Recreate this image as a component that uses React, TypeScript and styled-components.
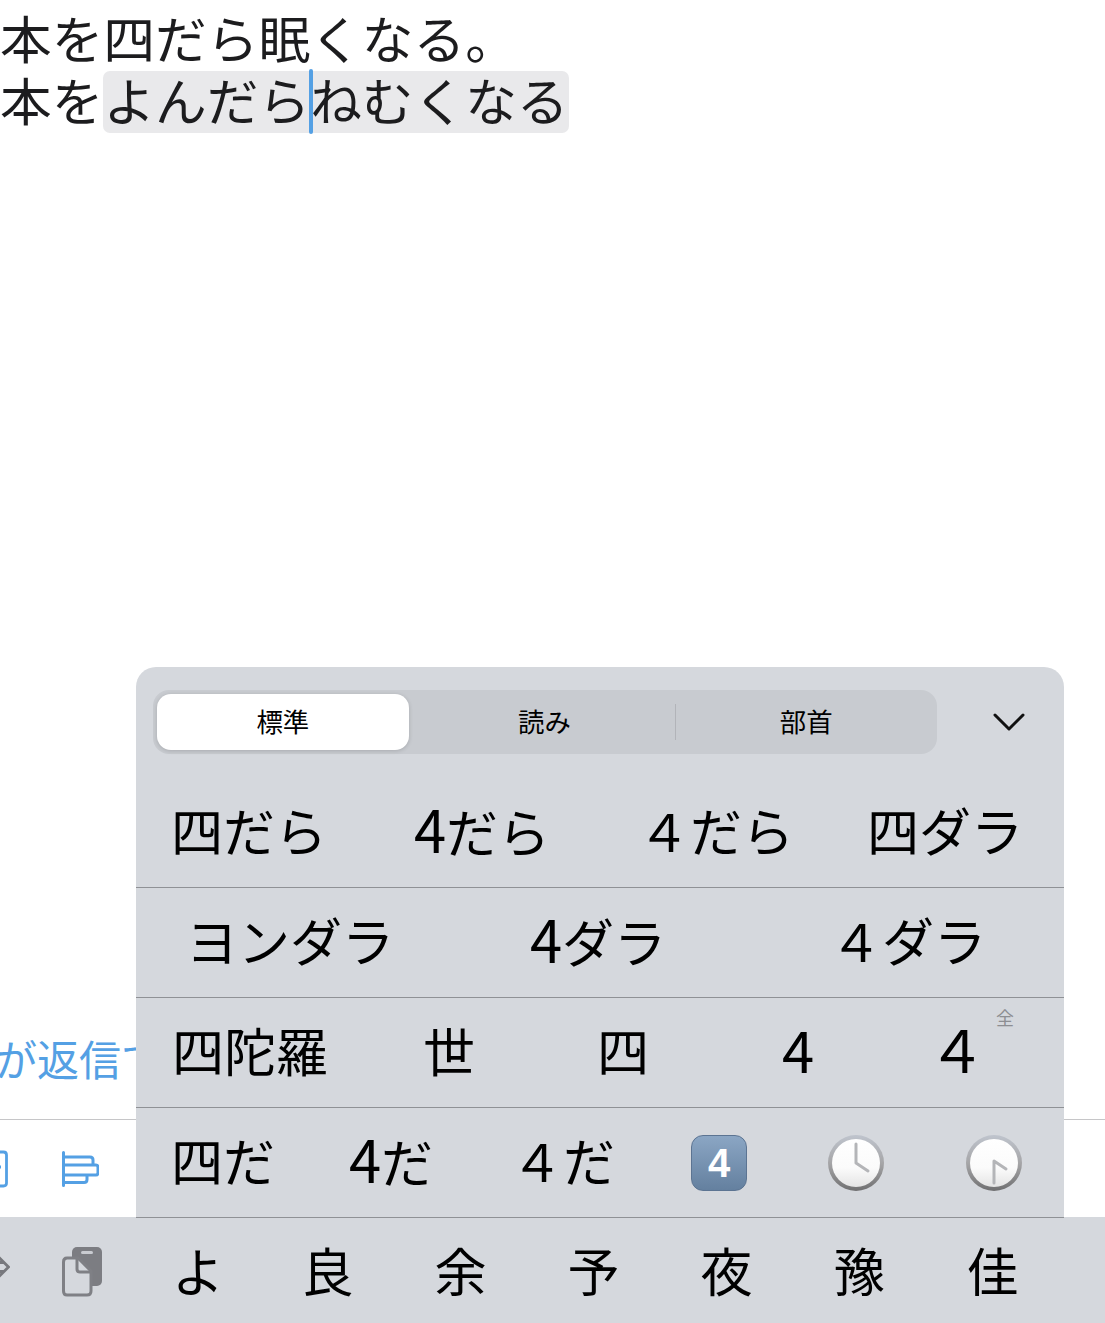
import { FC, ReactNode } from "react";
import styled, { createGlobalStyle } from "styled-components";

const JP = `"Noto Sans CJK JP", "Noto Sans", sans-serif`;

const rows: { tracks: number[]; items: string[] }[] = [
  { tracks: [226, 240, 228, 230], items: ["四だら", "4だら", "４だら", "四ダラ"] },
  { tracks: [308, 308, 312], items: ["ヨンダラ", "4ダラ", "４ダラ"] },
  { tracks: [228, 170, 178, 172, 146], items: ["四陀羅", "世", "四", "4", "４"] },
];

const tabs = ["読み", "部首"];
const keys = ["よ", "良", "余", "予", "夜", "豫", "佳"];

// half width 4 is drawn larger than the kana beside it
const renderCandidate = (text: string): ReactNode => {
  if (text.startsWith("4")) {
    return (
      <>
        <Digit>4</Digit>
        {text.slice(1)}
      </>
    );
  }
  if (text === "４") return <Digit>４</Digit>;
  return text;
};

const ClockFace: FC<{ id: string; hands: string }> = ({ id, hands }) => (
  <svg width="58" height="58" viewBox="0 0 58 58">
    <defs>
      <linearGradient id={`${id}-rim`} x1="0" y1="0" x2="0" y2="1">
        <stop offset="0" stopColor="#bfc4cd" />
        <stop offset="0.5" stopColor="#a6a6a8" />
        <stop offset="1" stopColor="#6f6f70" />
      </linearGradient>
      <linearGradient id={`${id}-face`} x1="0" y1="0" x2="0" y2="1">
        <stop offset="0" stopColor="#ffffff" />
        <stop offset="0.6" stopColor="#fbfbfb" />
        <stop offset="1" stopColor="#e4e4e4" />
      </linearGradient>
    </defs>
    <circle cx="29" cy="29" r="28" fill={`url(#${id}-rim)`} />
    <circle cx="29" cy="29" r="24" fill={`url(#${id}-face)`} />
    <path d={hands} fill="none" stroke="#b4b5b8" strokeWidth="3" strokeLinecap="round" strokeLinejoin="round" />
  </svg>
);

const App: FC = () => (
  <>
    <GlobalStyle />
    <Page>
      <Editor>
        <TextLine>本を四だら眠くなる。</TextLine>
        <TextLine>
          本を
          <Marked>
            よんだら
            <CaretAnchor>
              <Caret />
            </CaretAnchor>
            ねむくなる
          </Marked>
        </TextLine>
      </Editor>

      <ReplyLink>が返信で</ReplyLink>

      <Toolbar>
        <svg width="8" height="38" viewBox="0 0 8 38">
          <path d="M-4 2 H3.5 Q6.5 2 6.5 5 V33 Q6.5 36 3.5 36 H-4 M-4 17 H1" fill="none" stroke="#54a0e4" strokeWidth="2.8" />
        </svg>
        <svg width="38" height="36" viewBox="0 0 38 36">
          <path
            d="M2.5 1.5 V34.5 M2.5 6 H29 Q32 6 32 9 V14 M2.5 14 H35 Q37 14 37 16.5 V21.5 Q37 24 35 24 H2.5 M26 24 V28.5 Q26 31.5 23 31.5 H2.5"
            fill="none"
            stroke="#54a0e4"
            strokeWidth="3"
            strokeLinecap="round"
          />
        </svg>
      </Toolbar>

      <KeyboardBar>
        <LeadIcons>
          <ForwardArrow width="10" height="22" viewBox="0 0 10 22">
            <path d="M-6 6.5 H4 M-6 15.5 H4 M-1 1.5 L8.5 11 L-1 20.5" fill="none" stroke="#77787d" strokeWidth="2.8" />
          </ForwardArrow>
          <PasteIcon width="42" height="50" viewBox="0 0 42 50">
            <rect x="10" y="0" width="30" height="39" rx="5" fill="#7c7d82" />
            <rect x="19" y="4" width="12" height="3" rx="1.5" fill="#c9cbd0" />
            <path
              d="M5 11 H16 L29 24 V44 Q29 48 25 48 H5 Q1.5 48 1.5 44 V15 Q1.5 11 5 11 Z"
              fill="#d5d8dd"
              stroke="#7f8085"
              strokeWidth="3"
              strokeLinejoin="round"
            />
            <path d="M15 12 V22 Q15 25 18 25 H29" fill="none" stroke="#7f8085" strokeWidth="3" />
          </PasteIcon>
        </LeadIcons>
        {keys.map((k) => (
          <KeyCell key={k}>{k}</KeyCell>
        ))}
      </KeyboardBar>

      <CandidatePanel>
        <PanelHeader>
          <SegmentBar>
            <ActiveTab>標準</ActiveTab>
            {tabs.map((t, i) => (
              <Tab key={t} $divided={i > 0}>
                {t}
              </Tab>
            ))}
          </SegmentBar>
          <CollapseButton>
            <svg width="32" height="18" viewBox="0 0 32 18">
              <path d="M2 2 L16 16 L30 2" fill="none" stroke="#111" strokeWidth="3" strokeLinecap="round" strokeLinejoin="round" />
            </svg>
          </CollapseButton>
        </PanelHeader>

        {rows.map((row) => (
          <CandidateRow key={row.items[0]} $tracks={row.tracks}>
            {row.items.map((item) => (
              <Candidate key={item}>
                <CandidateText>{renderCandidate(item)}</CandidateText>
                {item === "４" && <WidthTag>全</WidthTag>}
              </Candidate>
            ))}
          </CandidateRow>
        ))}

        <CandidateRow $tracks={[174, 162, 182, 130, 144, 132]}>
          <Candidate>
            <CandidateText>四だ</CandidateText>
          </Candidate>
          <Candidate>
            <CandidateText>{renderCandidate("4だ")}</CandidateText>
          </Candidate>
          <Candidate>
            <CandidateText>４だ</CandidateText>
          </Candidate>
          <Candidate>
            <Keycap>4</Keycap>
          </Candidate>
          <Candidate>
            <ClockFace id="four" hands="M29 10 V29 L41 37" />
          </Candidate>
          <Candidate>
            <ClockFace id="half" hands="M29 49 V27 L41 35" />
          </Candidate>
        </CandidateRow>
      </CandidatePanel>
    </Page>
  </>
);

export default App;

const GlobalStyle = createGlobalStyle`
  html, body {
    margin: 0;
    padding: 0;
    background: #fff;
    font-family: ${JP};
  }
`;

const Page = styled.div`
  position: relative;
  width: 1105px;
  height: 1323px;
  overflow: hidden;
  display: flex;
  flex-direction: column;
  background: #fff;
`;

const Editor = styled.div`
  flex: 1;
  padding-top: 9px;
`;

const TextLine = styled.div`
  font-size: 51.7px;
  line-height: 56px;
  height: 62px;
  color: #1c1c1e;
  white-space: nowrap;
`;

const Marked = styled.span`
  display: inline-block;
  height: 62px;
  background: #e9e9eb;
  border-radius: 7px;
`;

const CaretAnchor = styled.span`
  position: relative;
  display: inline-block;
  width: 0;
  height: 62px;
  vertical-align: top;
`;

const Caret = styled.span`
  position: absolute;
  left: -1px;
  top: -2px;
  width: 4px;
  height: 65px;
  border-radius: 2px;
  background: #54a0e4;
`;

const ReplyLink = styled.div`
  height: 118px;
  line-height: 114px;
  font-size: 42px;
  color: #54a0e4;
  text-indent: -5px;
  white-space: nowrap;
`;

const Toolbar = styled.div`
  height: 97px;
  border-top: 1px solid #c6c6c8;
  display: flex;
  align-items: center;
  gap: 53px;
`;

const KeyboardBar = styled.div`
  height: 106px;
  background: #d5d8dd;
  display: flex;
  align-items: center;
`;

const LeadIcons = styled.div`
  width: 128px;
  display: flex;
  align-items: center;
  gap: 52px;
`;

const ForwardArrow = styled.svg`
  margin-bottom: 6px;
`;

const PasteIcon = styled.svg`
  margin-top: 4px;
`;

const KeyCell = styled.div`
  width: 133px;
  box-sizing: border-box;
  text-align: center;
  font-size: 52px;
  line-height: 60px;
  color: #000;
  ${LeadIcons} + & {
    padding-left: 7px;
  }
`;

const CandidatePanel = styled.div`
  position: absolute;
  left: 136px;
  top: 667px;
  width: 928px;
  height: 551px;
  background: #d5d8dd;
  border-radius: 20px 20px 0 0;
  display: flex;
  flex-direction: column;
`;

const PanelHeader = styled.div`
  height: 111px;
  box-sizing: border-box;
  padding: 23px 0 0 17px;
  display: flex;
  align-items: flex-start;
`;

const SegmentBar = styled.div`
  flex: none;
  width: 784px;
  height: 64px;
  box-sizing: border-box;
  padding: 4px 0 4px 4px;
  background: #c8cbd0;
  border-radius: 16px;
  display: flex;
  align-items: stretch;
`;

const ActiveTab = styled.div`
  width: 252px;
  margin-right: 5px;
  background: #fff;
  border-radius: 14px;
  box-shadow: 0 1px 4px rgba(0, 0, 0, 0.16);
  font-size: 26.4px;
  line-height: 54px;
  text-align: center;
  color: #000;
`;

const Tab = styled.div<{ $divided: boolean }>`
  position: relative;
  width: 262px;
  font-size: 26.4px;
  line-height: 54px;
  text-align: center;
  color: #000;
  &::before {
    content: "";
    display: ${(p) => (p.$divided ? "block" : "none")};
    position: absolute;
    left: 0;
    top: 10px;
    width: 1px;
    height: 36px;
    background: #b2b4b9;
  }
`;

const CollapseButton = styled.div`
  flex: 1;
  height: 64px;
  box-sizing: border-box;
  padding-left: 17px;
  display: flex;
  align-items: center;
  justify-content: center;
`;

const CandidateRow = styled.div<{ $tracks: number[] }>`
  height: 110px;
  box-sizing: border-box;
  border-bottom: 1px solid #8f9195;
  display: grid;
  grid-template-columns: ${(p) => p.$tracks.map((t) => `${t}px`).join(" ")};
  align-items: center;
`;

const Candidate = styled.div`
  position: relative;
  display: flex;
  justify-content: center;
  align-items: center;
`;

const CandidateText = styled.div`
  padding-bottom: 6px;
  font-size: 52px;
  line-height: 60px;
  color: #000;
  white-space: nowrap;
`;

const Digit = styled.span`
  font-size: 58px;
`;

const WidthTag = styled.span`
  position: absolute;
  left: 112px;
  top: -11px;
  font-size: 18px;
  line-height: 20px;
  color: #8d8e92;
`;

const Keycap = styled.div`
  width: 56px;
  height: 56px;
  border-radius: 12px;
  box-sizing: border-box;
  border: 1px solid #5c7492;
  background: linear-gradient(#8ba6c4, #64809f);
  color: #fff;
  font-family: "Liberation Sans", sans-serif;
  font-weight: 700;
  font-size: 40px;
  line-height: 54px;
  text-align: center;
`;
